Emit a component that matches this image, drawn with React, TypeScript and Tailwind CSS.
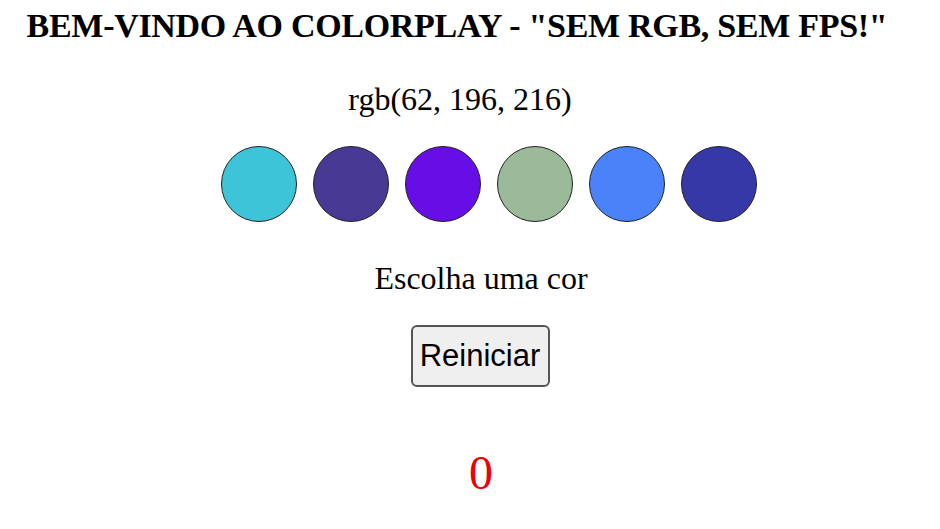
import { useState } from 'react';

const colors = [
  'rgb(62, 196, 216)',
  'rgb(72, 58, 148)',
  'rgb(103, 14, 230)',
  'rgb(154, 186, 154)',
  'rgb(74, 130, 250)',
  'rgb(54, 56, 168)',
];

export default function App() {
  const [score, setScore] = useState(0);

  return (
    <div className="flex flex-col items-center bg-white font-['Liberation_Serif',serif] text-black">
      <h1 className="mt-[6px] mr-[26px] text-[34px] font-bold leading-[40px] tracking-[-0.3px]">
        BEM-VINDO AO COLORPLAY - "SEM RGB, SEM FPS!"
      </h1>
      <p className="mt-[35px] mr-[20px] text-[32px] leading-[36px]">{colors[0]}</p>
      <div className="mt-[29px] ml-[38px] flex gap-4">
        {colors.map((c) => (
          <div
            key={c}
            className="h-[76px] w-[76px] rounded-full border border-[#222]"
            style={{ backgroundColor: c }}
          />
        ))}
      </div>
      <p className="mt-[38px] ml-[22px] text-[32px] leading-[36px]">Escolha uma cor</p>
      <button
        onClick={() => setScore(0)}
        className="mt-[29px] ml-[20px] h-[62px] w-[139px] rounded-md border-2 border-[#555] bg-[#efefef] font-['Liberation_Sans',sans-serif] text-[31px]"
      >
        Reiniciar
      </button>
      <p className="mt-[58px] ml-[22px] text-[48px] leading-[56px] text-[#e00]">{score}</p>
    </div>
  );
}
